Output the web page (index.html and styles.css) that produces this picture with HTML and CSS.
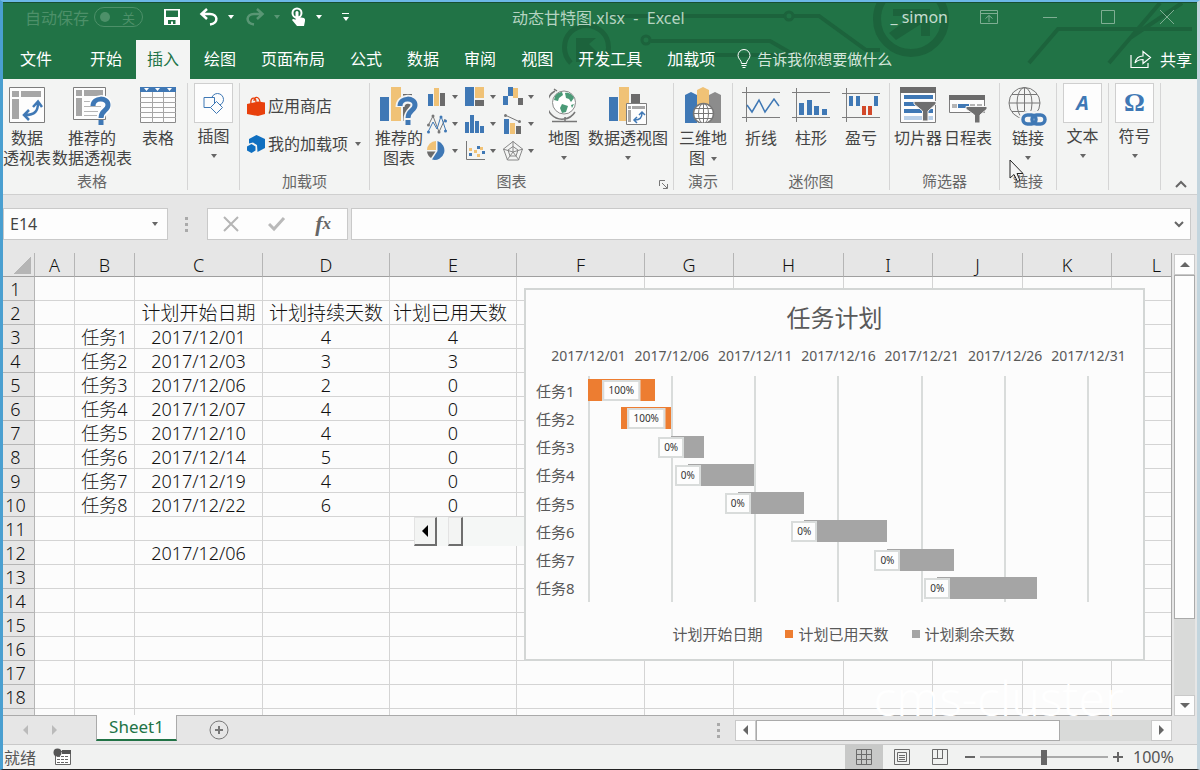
FILE: index.html
```html
<!DOCTYPE html>
<html lang="zh-CN">
<head>
    <meta charset="UTF-8">
    <meta name="viewport" content="width=device-width, initial-scale=1.0">
    <title>动态甘特图.xlsx - Excel</title>
    <link rel="stylesheet" href="styles.css">
</head>
<body>
    <div class="window">
        <header class="header">
            <svg class="circuit" width="640" height="76" viewBox="557 3 640 76" fill="none" stroke="#1c633c" stroke-width="4">
                <path d="M602 16H784M794 16H819L866 50H880"/>
                <circle cx="789" cy="16" r="4" stroke-width="3"/>
                <circle cx="646" cy="40" r="4" stroke-width="3"/>
                <path d="M651 41H770L796 56H826M708 55H790"/>
                <path d="M571 63A22 22 0 1 1 602 63" stroke-width="5"/>
                <path d="M576 62V38H596L589 44L600 55L594 61L582 50V62Z" fill="#1c633c" stroke="none"/>
                <circle cx="911" cy="19" r="34" stroke-width="8"/>
                <path d="M893 9H930V36H921V24L896 40L889 33L912 16H893Z" fill="#1c633c" stroke="none"/>
                <path d="M1029 63L1058 29H1192M1109 63L1160 3M1130 38L1182 3"/>
            </svg>
            <div class="titlebar">
                <label class="autosave">自动保存
                    <span class="toggle"><input type="checkbox">关</span>
                </label>
                <div class="quick">
                    <button class="save" aria-label="保存"><svg width="18" height="18" viewBox="0 0 18 18"><path fill="#fff" fill-rule="evenodd" d="M1 1H17V17H1ZM3 2.500V9H15V2.500ZM5 12V16H8V13.500H10V16H12.500V12Z"/></svg></button>
                    <button class="undo" aria-label="撤消"><svg width="20" height="18" viewBox="0 0 20 18"><path fill="none" stroke="#fff" stroke-width="2.500" d="M2 6H11C19 6 20 15 11 16.500M8 1L2.500 6L8 11"/></svg><i class="arrow"></i></button>
                    <button class="redo" aria-label="恢复"><svg width="20" height="18" viewBox="0 0 20 18"><path fill="none" stroke="#fff" stroke-width="2.500" d="M18 6H9C1 6 0 15 9 16.500M12 1L17.500 6L12 11"/></svg><i class="arrow"></i></button>
                    <button class="touch" aria-label="触摸模式"><svg width="16" height="20" viewBox="0 0 16 20"><circle cx="6" cy="6" r="4.500" fill="none" stroke="#fff" stroke-width="2"/><path fill="#fff" d="M4.500 5Q6 3 7.500 5V10L13 11Q14.500 12 14 14L13 19H6L1 13Q2 11 4.500 13Z"/></svg><i class="arrow"></i></button>
                    <button class="more" aria-label="自定义"><i class="arrow"></i></button>
                </div>
                <h1>动态甘特图.xlsx&nbsp; -&nbsp; Excel</h1>
                <span class="user">_ simon</span>
                <div class="controls">
                    <button aria-label="功能区选项"><svg width="18" height="14" viewBox="0 0 18 14"><path d="M.5.5H17.500V13.500H.5ZM.5 3.500H17.500M9 12V5.500M5.500 8.500L9 5.500L12.500 8.500"/></svg></button>
                    <button aria-label="最小化"><svg width="14" height="14" viewBox="0 0 14 14"><path d="M0 7.500H14"/></svg></button>
                    <button aria-label="最大化"><svg width="14" height="14" viewBox="0 0 14 14"><path d="M.5.5H13.500V13.500H.5Z"/></svg></button>
                    <button aria-label="关闭"><svg width="14" height="14" viewBox="0 0 14 14"><path d="M0 0L14 14M14 0L0 14"/></svg></button>
                </div>
            </div>
            <nav class="tabs">
                <button class="tab file">文件</button>
                <button class="tab">开始</button>
                <button class="tab active">插入</button>
                <button class="tab">绘图</button>
                <button class="tab">页面布局</button>
                <button class="tab">公式</button>
                <button class="tab">数据</button>
                <button class="tab">审阅</button>
                <button class="tab">视图</button>
                <button class="tab">开发工具</button>
                <button class="tab">加载项</button>
                <button class="tell">
                    <svg width="14" height="20" viewBox="0 0 14 20" fill="none" stroke="#fff"><path d="M4.500 14.500C4.500 11 1 10 1 6.500A6 6 0 0 1 13 6.500C13 10 9.500 11 9.500 14.500Z"/><path d="M4.500 16.500H9.500M5.500 18.500H8.500"/></svg>
                    告诉我你想要做什么
                </button>
                <button class="share">
                    <svg width="22" height="20" viewBox="0 0 22 20" fill="none" stroke="#fff" stroke-width="1.200"><path d="M1 6V18.500H18V14"/><path d="M5 14C6 9 9 7 13 7V2.500L20.500 8.500L13 14.500V10.500C9 10.500 7 11.500 5 14Z"/></svg>
                    共享
                </button>
            </nav>
        </header>

        <section class="ribbon">
            <div class="group g-table">
                <div class="tools">
                    <button class="tool">
                        <svg width="36" height="36" viewBox="0 0 36 36"><path fill="#fdfdfd" stroke="#7d7d7d" d="M.5.5H35.500V35.500H.5Z"/><path fill="#a6a6a6" d="M3 4H10V10H3ZM12 4H32V10H12ZM3 12H10V32H3Z"/><path fill="none" stroke="#3f78b5" stroke-width="2.500" d="M16 28C26 28 29 24 29 16M24 20L29 14.500L33 20M20 23L15 28L20 33"/></svg>
                        <span>数据<br>透视表</span>
                    </button>
                    <button class="tool wide">
                        <svg width="38" height="38" viewBox="0 0 38 38"><path fill="#fdfdfd" stroke="#7d7d7d" d="M.5.5H32.500V32.500H.5Z"/><path fill="#a6a6a6" d="M3 3H9V9H3ZM11 3H30V9H11ZM3 11H9V29H3Z"/><path stroke="#b5b5b5" d="M11 14.500H30M11 19.500H28M11 24.500H25M11 28.500H24"/><path fill="none" stroke="#fff" stroke-width="8" d="M20 19C20 10 35 10 35 18C35 24 28 24 28 31"/><path fill="none" stroke="#3f78b5" stroke-width="5" d="M20 19C20 10 35 10 35 18C35 24 28 23 28 31"/><path fill="#3f78b5" d="M25.500 33H30.500V38H25.500Z"/></svg>
                        <span>推荐的<br>数据透视表</span>
                    </button>
                    <button class="tool">
                        <svg width="36" height="36" viewBox="0 0 36 36"><path fill="#fdfdfd" stroke="#8a8a8a" d="M.5.5H35.500V35.500H.5Z"/><path stroke="#a6a6a6" fill="none" d="M12.500 5V36M23.500 5V36M0 10.500H36M0 15.500H36M0 20.500H36M0 25.500H36M0 30.500H36"/><path fill="#3f78b5" d="M0 0H36V5H0Z"/><path fill="#fff" d="M4 1H9L6.500 4ZM15 1H20L17.500 4ZM27 1H32L29.500 4Z"/></svg>
                        <span>表格</span>
                    </button>
                </div>
                <h2>表格</h2>
            </div>

            <div class="group g-small">
                <button class="tool boxed">
                    <b class="box"><svg width="22" height="22" viewBox="0 0 22 22" fill="none" stroke="#3f78b5"><circle cx="14.500" cy="7.500" r="6"/><path fill="#fdfdfd" d="M1 5.500H11.500V15.500H1Z"/><path fill="#fdfdfd" d="M13.500 9.500L19.500 15.500L13.500 21.500L7.500 15.500Z"/></svg></b>
                    <span>插图</span><i class="arrow"></i>
                </button>
            </div>

            <div class="group g-addins">
                <div class="links">
                    <button class="link">
                        <svg width="18" height="20" viewBox="0 0 18 20"><path fill="#e8400c" d="M0 8L11 5.500L18 6.500V18L11 20L0 18Z"/><path fill="none" stroke="#e8400c" stroke-width="1.300" d="M4 8C3 1 9 0 9 6M7 5C7 0 12 0 13 6"/></svg>
                        应用商店
                    </button>
                    <button class="link">
                        <svg width="18" height="18" viewBox="0 0 18 18" fill="#0f6fc0"><path d="M9.500 0L18 4V13L10.500 17L10 10L6 7.500L2 8.500V4Z"/><path d="M0 11.500L4.500 9L8.500 11.500V15.500L4.500 18L0 15.500Z"/></svg>
                        我的加载项 <i class="arrow"></i>
                    </button>
                </div>
                <h2>加载项</h2>
            </div>

            <div class="group g-charts">
                <div class="tools">
                    <button class="tool">
                        <svg width="38" height="38" viewBox="0 0 38 38"><path fill="#3f78b5" d="M0 10H9V34H0Z"/><path fill="#f0c276" d="M11 0H21V34H11Z"/><path fill="#6b6b6b" d="M23 7H32V34H23Z"/><path fill="none" stroke="#f4f4f4" stroke-width="9" d="M20 20C20 10 35 10 35 18C35 24 28 24 28 32V38"/><path fill="none" stroke="#3f78b5" stroke-width="5" d="M20 19C20 10 35 10 35 18C35 24 28 23 28 31"/><path fill="#3f78b5" d="M25.500 33H30.500V38H25.500Z"/></svg>
                        <span>推荐的<br>图表</span>
                    </button>
                    <div class="chart-types">
                        <button aria-label="柱形图"><svg width="20" height="20" viewBox="0 0 20 20"><path fill="#3f78b5" d="M1 7H6V19H1Z"/><path fill="#f0c276" d="M7 1H12V19H7Z"/><path fill="#6b6b6b" d="M13 6H18V19H13Z"/></svg><i class="arrow"></i></button>
                        <button aria-label="树状图"><svg width="20" height="20" viewBox="0 0 20 20"><path fill="#3f78b5" d="M0 0H9V19H0Z"/><path fill="#f0c276" d="M10 0H19V11H10Z"/><path fill="#6b6b6b" d="M10 13H19V19H10Z"/></svg><i class="arrow"></i></button>
                        <button aria-label="瀑布图"><svg width="20" height="20" viewBox="0 0 20 20"><path fill="#3f78b5" d="M0 9H5V18H0ZM5 0H10V9H5Z"/><path fill="#f0c276" d="M10 1H15V11H10Z"/><path fill="#6b6b6b" d="M15 11H20V18H15Z"/></svg><i class="arrow"></i></button>
                        <button aria-label="折线图"><svg width="20" height="20" viewBox="0 0 20 20" fill="none"><path stroke="#777" d="M1 12L6 2L12 18L18 5"/><path stroke="#3f78b5" d="M1 18L6 8L10 15L14 2L19 17"/><g fill="#777"><circle cx="1.500" cy="11" r="1.500"/><circle cx="6" cy="2" r="1.500"/><circle cx="12" cy="18" r="1.500"/></g><g fill="#3f78b5"><circle cx="1.500" cy="18" r="1.500"/><circle cx="14" cy="3" r="1.500"/><circle cx="18.500" cy="7" r="1.500"/><circle cx="18.500" cy="17" r="1.500"/></g></svg><i class="arrow"></i></button>
                        <button aria-label="直方图"><svg width="20" height="20" viewBox="0 0 20 20"><path fill="#3f78b5" d="M0 8H4V19H0ZM5 1H9V19H5ZM10 7H14V19H10ZM15 12H19V19H15Z"/></svg><i class="arrow"></i></button>
                        <button aria-label="组合图"><svg width="20" height="20" viewBox="0 0 20 20"><path fill="#3f78b5" d="M1 5H6V20H1Z"/><path fill="#f0c276" d="M7 9H12V20H7Z"/><path fill="#6b6b6b" d="M13 12H18V20H13Z"/><path fill="none" stroke="#777" d="M2 1L17 8"/><circle cx="2.500" cy="1.500" r="1.500" fill="#777"/><circle cx="16.500" cy="7.500" r="1.500" fill="#777"/></svg><i class="arrow"></i></button>
                        <button aria-label="饼图"><svg width="20" height="20" viewBox="0 0 20 20"><path fill="#3f78b5" d="M10.500 0A9.500 9.500 0 1 1 5 18.500L10.500 10Z"/><path fill="#f0c276" d="M9 0V9H0A9 9 0 0 1 9 0Z"/><path fill="#6b6b6b" d="M0 10.500H8.500L4 17A9 9 0 0 1 0 10.500Z"/></svg><i class="arrow"></i></button>
                        <button aria-label="散点图"><svg width="20" height="20" viewBox="0 0 20 20"><path fill="none" stroke="#777" d="M1.500 0V18.500H20"/><path fill="#3f78b5" d="M4 12H7V15H4ZM12 5H15V8H12ZM17 10H20V13H17Z"/><path fill="#f0c276" d="M4 7H7V10H4ZM9 9H12V12H9ZM12 13H15V16H12ZM15 6H18V9H15Z"/></svg><i class="arrow"></i></button>
                        <button aria-label="雷达图"><svg width="20" height="20" viewBox="0 0 20 20" fill="none" stroke="#888"><path d="M10 .5L19.500 8L15.500 19H4.500L.5 8ZM10 5.500L15 9L13 15H7L5 9ZM10 0V11L20 8M10 11L16 19M10 11L4 19M10 11L0 8"/></svg><i class="arrow"></i></button>
                    </div>
                    <button class="tool map">
                        <svg width="30" height="36" viewBox="0 0 30 36"><circle cx="15" cy="15.500" r="11.500" fill="#fff" stroke="#8a8a8a"/><path fill="#4b9a77" d="M6 9C8 6 11 5 13 5L14 8L10 11L9 14L5 13ZM16 6C20 5 24 8 25 11L22 15L20 12L17 11ZM13 17L19 19L17 25L13 26L11 21ZM22 18L25 17L23 21Z"/><path fill="none" stroke="#777" stroke-width="1.500" d="M5 2L8 4M6 4A15 15 0 1 0 26 25M16 30V34M3 34.500H28"/></svg>
                        <span>地图</span><i class="arrow"></i>
                    </button>
                    <button class="tool wide">
                        <svg width="40" height="38" viewBox="0 0 40 38"><path fill="#3f78b5" d="M1 10H10V34H1Z"/><path fill="#f0c276" d="M11 0H21V34H11Z"/><path fill="#6b6b6b" d="M23 7H32V20H23Z"/><path fill="#fdfdfd" stroke="#7d7d7d" d="M18.500 16.500H38.500V37.500H18.500Z"/><path fill="#a6a6a6" d="M20 19H23V22H20ZM24 19H37V22H24ZM20 23H23V35H20Z"/><path fill="none" stroke="#3f78b5" stroke-width="1.500" d="M27 33C32 33 34 30 34 26M31 28L34 25L37 28M29 30L26 33L29 36"/></svg>
                        <span>数据透视图</span><i class="arrow"></i>
                    </button>
                </div>
                <h2>图表</h2>
                <button class="launcher" aria-label="图表选项"><svg width="9" height="9" viewBox="0 0 9 9" fill="none" stroke="#777"><path d="M.5 6V.5H6M3 3L8 8M8.500 4V8.500H4"/></svg></button>
            </div>

            <div class="group g-tour">
                <div class="tools">
                    <button class="tool">
                        <svg width="36" height="36" viewBox="0 0 36 36"><path fill="#3f78b5" d="M0 8L6 5L12 8V36H0Z"/><path fill="#f0c276" d="M12 3L18 0L24 3V20H12Z"/><path fill="#8c8c8c" d="M24 8L30 5L36 8V36H24Z"/><g fill="#fff" stroke="#777"><circle cx="18.500" cy="26.500" r="10" stroke-width="1.500"/><path fill="none" d="M8.500 26.500H28.500M10 21.500H27M10 31.500H27M18.500 16.500V36.500"/><ellipse fill="none" cx="18.500" cy="26.500" rx="5" ry="10"/></g></svg>
                        <span>三维地<br>图 <i class="arrow inline"></i></span>
                    </button>
                </div>
                <h2>演示</h2>
            </div>

            <div class="group g-spark">
                <div class="tools">
                    <button class="tool">
                        <svg width="38" height="36" viewBox="0 0 38 36" fill="none"><path stroke="#7d7d7d" d="M4.500 0V35M0 5.500H38M0 30.500H38"/><path stroke="#3f78b5" stroke-width="1.500" d="M5 18L10 25L17 13L23 25L32 12L37 19"/></svg>
                        <span>折线</span>
                    </button>
                    <button class="tool">
                        <svg width="38" height="36" viewBox="0 0 38 36"><path stroke="#7d7d7d" d="M4.500 1V35M0 5.500H38M0 30.500H38"/><path fill="#3f78b5" d="M7 16H12V28H7ZM15 13H20V28H15ZM22 19H27V28H22ZM30 22H35V28H30Z"/></svg>
                        <span>柱形</span>
                    </button>
                    <button class="tool">
                        <svg width="38" height="36" viewBox="0 0 38 36"><path stroke="#7d7d7d" d="M4.500 1V35M0 6.500H38M0 30.500H38"/><path fill="#3f78b5" d="M7 9H11V19H7ZM14 9H18V19H14ZM32 9H36V19H32Z"/><path fill="#d2492a" d="M20 19H24V28H20ZM26 19H30V28H26Z"/></svg>
                        <span>盈亏</span>
                    </button>
                </div>
                <h2>迷你图</h2>
            </div>

            <div class="group g-filter">
                <div class="tools">
                    <button class="tool">
                        <svg width="36" height="36" viewBox="0 0 36 36"><path fill="#fdfdfd" stroke="#7d7d7d" d="M.5.5H35.500V35.500H.5Z"/><path fill="#6b6b6b" d="M0 0H36V6H0Z"/><path fill="#3f78b5" d="M4 8H33V12H4ZM4 15H33V19H4ZM4 22H33V26H4Z"/><path fill="#b8cfe8" d="M4 29H33V33H4Z"/><path fill="#6f6f6f" stroke="#f4f4f4" d="M14 14.500H36V17L28 24V34H22.500V24L14 17Z"/></svg>
                        <span>切片器</span>
                    </button>
                    <button class="tool">
                        <svg width="38" height="36" viewBox="0 0 38 36"><path fill="#fdfdfd" stroke="#7d7d7d" d="M.5 8.500H35.500V25.500H.5Z"/><path fill="#6b6b6b" d="M0 8H36V13H0Z"/><path fill="#b5b5b5" d="M3 17H8V21H3ZM21 17H26V21H21ZM28 17H33V21H28Z"/><path fill="#3f78b5" d="M9 17H20V21H9Z"/><path fill="#6f6f6f" stroke="#f4f4f4" d="M17 19.500H38V22L31 28V36H25.500V28L17 22Z"/></svg>
                        <span>日程表</span>
                    </button>
                </div>
                <h2>筛选器</h2>
            </div>

            <div class="group g-link">
                <div class="tools">
                    <button class="tool">
                        <svg width="40" height="40" viewBox="0 0 40 40" fill="none"><g stroke="#777"><circle cx="16.500" cy="16" r="15.500"/><ellipse cx="16.500" cy="16" rx="7.500" ry="15.500"/><path d="M1 16H32M16.500 0V32M4 7.500H29M4 24.500H29"/></g><g stroke="#f4f4f4" stroke-width="8"><rect x="15" y="28" width="14" height="9" rx="4.500"/><rect x="24" y="28" width="14" height="9" rx="4.500"/></g><g stroke="#3f78b5" stroke-width="3.500"><rect x="15" y="28" width="13" height="9" rx="4.500"/><rect x="24" y="28" width="13" height="9" rx="4.500"/></g></svg>
                        <span>链接</span><i class="arrow"></i>
                    </button>
                </div>
                <h2>链接</h2>
                <svg class="cursor" width="18" height="24" viewBox="0 0 18 24"><path fill="#f4f4f4" stroke="#222" d="M1 1V19L5 15.500L8.500 22.500L11 21.500L8 14.500H14Z"/></svg>
            </div>

            <div class="group g-small">
                <button class="tool boxed">
                    <b class="box letter">A</b>
                    <span>文本</span><i class="arrow"></i>
                </button>
            </div>
            <div class="group g-small">
                <button class="tool boxed">
                    <b class="box omega">Ω</b>
                    <span>符号</span><i class="arrow"></i>
                </button>
            </div>
            <button class="collapse" aria-label="折叠功能区"><svg width="12" height="8" viewBox="0 0 12 8" fill="none" stroke="#666" stroke-width="2"><path d="M1 7L6 2L11 7"/></svg></button>
        </section>

        <section class="formula">
            <div class="namebox">
                <input type="text" value="E14" aria-label="名称框">
                <i class="arrow"></i>
            </div>
            <i class="dots"></i>
            <div class="fx">
                <button aria-label="取消"><svg width="16" height="16" viewBox="0 0 16 16" stroke="#b5b5b5" stroke-width="2"><path d="M1 1L15 15M15 1L1 15"/></svg></button>
                <button aria-label="输入"><svg width="18" height="16" viewBox="0 0 18 16" fill="none" stroke="#b9b9b9" stroke-width="3"><path d="M1 8L6 13L16 2"/></svg></button>
                <button class="fn" aria-label="插入函数">f<small>x</small></button>
            </div>
            <div class="entry">
                <input type="text" aria-label="编辑栏">
                <svg width="10" height="7" viewBox="0 0 10 7" fill="none" stroke="#666" stroke-width="2"><path d="M1 1L5 5L9 1"/></svg>
            </div>
        </section>

        <main class="workspace">
            <div class="sheet">
                <table>
                    <colgroup>
                        <col class="w-head"><col class="w-a"><col class="w-b"><col class="w-c"><col class="w-d"><col class="w-d"><col class="w-c">
                        <col class="w-g"><col class="w-h"><col class="w-g"><col class="w-j"><col class="w-g"><col class="w-j">
                    </colgroup>
                    <thead>
                        <tr>
                            <th class="corner"></th><th>A</th><th>B</th><th>C</th><th>D</th><th>E</th><th>F</th>
                            <th>G</th><th>H</th><th>I</th><th>J</th><th>K</th><th>L</th>
                        </tr>
                    </thead>
                    <tbody></tbody>
                </table>

                <div class="spinner">
                    <button aria-label="减少"></button>
                    <span class="spinner-thumb"></span>
                </div>

                <figure class="chart">
                    <figcaption>任务计划</figcaption>
                    <div class="axis"></div>
                    <div class="plot"></div>
                    <div class="legend">
                        <span>计划开始日期</span>
                        <span class="used">计划已用天数</span>
                        <span class="left">计划剩余天数</span>
                    </div>
                </figure>
            </div>
            <div class="vscroll">
                <button class="up" aria-label="向上"></button>
                <div class="track"><div class="thumb"></div></div>
                <button class="down" aria-label="向下"></button>
            </div>
            <div class="watermark">cms-cluster</div>
        </main>

        <section class="sheetbar">
            <button class="nav prev" aria-label="上一个"></button>
            <button class="nav next" aria-label="下一个"></button>
            <button class="sheet-tab">Sheet1</button>
            <button class="add" aria-label="新工作表"><svg width="20" height="20" viewBox="0 0 20 20" fill="none" stroke="#777"><circle cx="10" cy="10" r="9"/><path stroke-width="2" d="M10 6V14M6 10H14"/></svg></button>
            <i class="dots"></i>
            <div class="hscroll">
                <button class="back" aria-label="向左"></button>
                <div class="track"><div class="thumb"></div></div>
                <button class="forward" aria-label="向右"></button>
            </div>
        </section>

        <footer class="status">
            <span class="ready">就绪</span>
            <svg width="18" height="18" viewBox="0 0 18 18"><path fill="#fff" stroke="#666" d="M2.500 3.500H17.500V16.500H2.500Z"/><path fill="#555" d="M9 2H18V6H9Z"/><circle cx="4.500" cy="4.500" r="4" fill="#555"/><path stroke="#666" stroke-dasharray="3 1" d="M4 8.500H16M4 11.500H16M4 14.500H16"/></svg>
            <div class="views">
                <button class="on" aria-label="普通"><svg width="18" height="18" viewBox="0 0 18 18"><path d="M1.500 1.500H16.500V16.500H1.500ZM6.500 1V17M11.500 1V17M1 6.500H17M1 11.500H17"/></svg></button>
                <button aria-label="页面布局"><svg width="18" height="18" viewBox="0 0 18 18"><path d="M1.500 1.500H16.500V16.500H1.500ZM4.500 4.500H13.500V13.500H4.500ZM6 7.500H12M6 9.500H12M6 11.500H12"/></svg></button>
                <button aria-label="分页预览"><svg width="18" height="18" viewBox="0 0 18 18"><path d="M1.500 1.500H16.500V16.500H1.500ZM6.500 1V10M11.500 1V10M1 10.500H12"/></svg></button>
            </div>
            <button class="zoom minus" aria-label="缩小"></button>
            <input class="slider" type="range" min="0" max="100" value="50" aria-label="缩放">
            <button class="zoom plus" aria-label="放大"></button>
            <span class="percent">100%</span>
        </footer>
    </div>

    <script>
        // name, start date, planned days, used days, days after the first date
        const tasks = [
            ['任务1', '2017/12/01', 4, 4, 0],
            ['任务2', '2017/12/03', 3, 3, 2],
            ['任务3', '2017/12/06', 2, 0, 5],
            ['任务4', '2017/12/07', 4, 0, 6],
            ['任务5', '2017/12/10', 4, 0, 9],
            ['任务6', '2017/12/14', 5, 0, 13],
            ['任务7', '2017/12/19', 4, 0, 18],
            ['任务8', '2017/12/22', 6, 0, 21]
        ]
        const dates = ['2017/12/01', '2017/12/06', '2017/12/11', '2017/12/16', '2017/12/21', '2017/12/26', '2017/12/31']
        const days = 30

        const cells = { 2: ['', '', '计划开始日期', '计划持续天数', '计划已用天数'], 12: ['', '', '2017/12/06'] }
        tasks.forEach((t, i) => cells[i + 3] = ['', t[0], t[1], t[2], t[3]])
        let rows = ''
        for (let r = 1; r <= 19; r++) {
            rows += `<tr class="row${r}"><th>${r < 19 ? r : ''}</th>`
            for (let c = 0; c < 12; c++) {
                const value = cells[r] && cells[r][c] !== undefined ? cells[r][c] : ''
                rows += `<td>${value}</td>`
            }
            rows += '</tr>'
        }
        document.querySelector('tbody').innerHTML = rows

        document.querySelector('.axis').innerHTML = dates.map(d => `<span>${d}</span>`).join('')
        document.querySelector('.plot').innerHTML = tasks.map(t => {
            const bar = `margin-left: ${t[4] / days * 100}%; width: ${t[2] / days * 100}%`
            const used = t[3] / t[2] * 100
            return `<div class="task"><span class="name">${t[0]}</span><div class="lane">
                <div class="bar" style="${bar}"><div class="done" style="width: ${used}%"><span>${used}%</span></div></div>
            </div></div>`
        }).join('')
    </script>
</body>
</html>
```
FILE: styles.css
```css
* {
    box-sizing: border-box;
}
body {
    margin: 0;
    font-family: "Noto Sans", "Noto Sans CJK SC", sans-serif;
    font-size: 16px;
    color: #444;
}
button, input {
    font: inherit;
    color: inherit;
    background: none;
    border: none;
    padding: 0;
    margin: 0;
}
button {
    display: flex;
    align-items: center;
    justify-content: center;
    white-space: nowrap;
}
h1, h2, figure {
    margin: 0;
    font-weight: normal;
}
svg {
    display: block;
    flex: none;
}
.window {
    display: flex;
    flex-direction: column;
    height: 100vh;
    min-height: 600px;
    border-top: 2px solid #6cb8e6;
    border-right: 3px solid #c3d5de;
    border-bottom: 1px solid #222;
    border-left: 3px solid #4a9fd0;
    overflow: hidden;
}
.arrow {
    flex: none;
    width: 0;
    border: 3px solid transparent;
    border-top: 4px solid #666;
    border-bottom: none;
}

/* title bar and tabs */
.header {
    position: relative;
    flex: none;
    background: #217346;
    border-top: 1px solid #184f31;
    color: #fff;
}
.circuit {
    position: absolute;
    top: 0;
    right: 0;
}
.titlebar, .tabs {
    position: relative;
    display: flex;
}
.titlebar {
    height: 28px;
    align-items: center;
}
.header .arrow {
    border-top-color: #fff;
}
.autosave {
    display: flex;
    align-items: center;
    gap: 5px;
    margin-left: 22px;
    color: #4d9069;
}
.toggle {
    display: flex;
    align-items: center;
    justify-content: space-between;
    width: 49px;
    height: 20px;
    padding: 0 7px 0 5px;
    border: 1px solid #4d9069;
    border-radius: 10px;
    font-size: 13px;
}
.toggle input {
    appearance: none;
    width: 10px;
    height: 10px;
    border-radius: 5px;
    background: #4d9069;
}
.quick {
    display: flex;
    align-items: center;
    width: 349px;
    margin-left: 20px;
}
.quick button {
    gap: 9px;
    margin-right: 11px;
}
.quick .save {
    margin-right: 18px;
}
.quick .redo {
    opacity: .25;
}
.quick .more {
    width: 7px;
    height: 8px;
    margin-left: 9px;
    align-items: flex-end;
    border-top: 1px solid #fff;
}
.titlebar h1 {
    flex: 1;
    font-size: 16px;
    color: #b5d3c1;
}
.user {
    margin-right: 32px;
    color: #c4dccf;
}
.controls {
    display: flex;
    justify-content: space-between;
    width: 194px;
    margin-right: 23px;
}
.controls svg {
    fill: none;
    stroke: #7fae93;
}
.tabs {
    height: 48px;
    align-items: flex-end;
    gap: 3px;
    padding-left: 6px;
}
.tab {
    height: 39px;
    padding: 0 11px 4px;
}
.tab.file {
    margin-right: 13px;
}
.tab.active {
    background: #f3f4f3;
    color: #217346;
}
.tell {
    height: 39px;
    margin-left: 8px;
    padding-bottom: 2px;
    gap: 6px;
    font-size: 15px;
    color: #d5e6dc;
}
.share {
    height: 39px;
    margin: 0 5px 0 auto;
    padding-bottom: 2px;
    gap: 8px;
}

/* ribbon */
.ribbon {
    display: flex;
    flex: none;
    height: 116px;
    padding: 4px 0;
    background: #f3f4f3;
    border-bottom: 1px solid #cfcfcf;
    line-height: 20px;
}
.group {
    position: relative;
    display: flex;
    flex-direction: column;
    justify-content: space-between;
    flex: none;
    border-right: 1px solid #d5d5d5;
}
.group h2 {
    font-size: 15px;
    line-height: 17px;
    text-align: center;
    color: #666;
}
.g-table { width: 185px; }
.g-small { width: 52px; }
.g-addins { width: 130px; }
.g-charts { width: 304px; }
.g-tour { width: 59px; }
.g-spark { width: 157px; }
.g-filter { width: 110px; }
.g-link { width: 57px; }
.tools {
    display: flex;
    align-items: flex-start;
}
.tool {
    flex-direction: column;
    justify-content: flex-start;
    width: 50px;
    padding-top: 4px;
}
.tool svg {
    margin-bottom: 5px;
}
.tool svg[height="38"] {
    margin-bottom: 3px;
}
.tool svg[height="40"] {
    margin-bottom: 1px;
}
.tool > .arrow {
    margin-top: 8px;
}
.tool.wide {
    width: 82px;
}
.tool.map {
    width: 46px;
}
.arrow.inline {
    display: inline-block;
    margin: 0 0 3px 2px;
}
.tool.boxed {
    width: 51px;
    padding: 0;
}
.box {
    display: flex;
    align-items: center;
    justify-content: center;
    width: 39px;
    height: 40px;
    margin-bottom: 3px;
    background: #fdfdfd;
    border: 1px solid #cfcfcf;
    color: #3f78b5;
}
.box svg {
    margin: 0;
}
.letter {
    font-style: italic;
    font-size: 20px;
}
.omega {
    font-family: "Liberation Serif", serif;
    font-size: 26px;
}
.g-spark .tools, .g-filter .tools {
    padding-left: 3px;
}
.g-table .tool:first-child {
    width: 48px;
}
.g-table h2 {
    padding-right: 6px;
}
.links {
    display: flex;
    flex-direction: column;
    gap: 18px;
    padding: 13px 0 0 7px;
}
.link {
    justify-content: flex-start;
    height: 20px;
    gap: 3px;
}
.link .arrow {
    margin-left: 4px;
}
.g-charts .tools {
    padding-left: 4px;
}
.chart-types {
    display: grid;
    grid-template-columns: repeat(3, 38px);
    grid-auto-rows: 27px;
    margin-left: 3px;
}
.chart-types button {
    justify-content: flex-start;
    gap: 5px;
}
.chart-types svg {
    margin: 0;
}
.g-charts h2 {
    padding-right: 20px;
}
.launcher {
    position: absolute;
    right: 5px;
    bottom: 1px;
}
.g-tour .tools, .g-link .tools {
    justify-content: center;
}
.cursor {
    position: absolute;
    left: 9px;
    top: 76px;
}
.collapse {
    align-self: flex-end;
    margin: 0 10px 2px auto;
}

/* formula bar */
.formula {
    display: flex;
    align-items: center;
    flex: none;
    height: 58px;
    padding: 0 6px 0 0;
    background: #e6e6e6;
}
.namebox, .fx, .entry {
    display: flex;
    align-items: center;
    height: 32px;
    background: #fdfdfd;
    border: 1px solid #c9c9c9;
}
.namebox {
    width: 165px;
    padding: 0 9px 0 6px;
}
.namebox input, .entry input {
    flex: 1;
    width: 0;
}
.dots {
    width: 3px;
    height: 15px;
    margin: 0 19px 0 17px;
    background: repeating-linear-gradient(#aaa 0 3px, transparent 3px 6px);
}
.fx {
    justify-content: space-between;
    width: 141px;
    margin-right: 3px;
    padding: 0 16px 0 15px;
}
.fn {
    font-family: "Liberation Serif", serif;
    font-size: 22px;
    font-style: italic;
    font-weight: bold;
    color: #666;
}
.fn small {
    font-size: 17px;
}
.entry {
    flex: 1;
    padding: 0 6px;
}

/* cells */
.workspace {
    position: relative;
    display: flex;
    flex: 1;
    min-height: 0;
    background: #e6e6e6;
}
.sheet {
    position: relative;
    flex: 1;
    min-width: 0;
    overflow: hidden;
    background: #fcfcfc;
    border-right: 1px solid #aaa;
    border-bottom: 1px solid #aaa;
}
table {
    table-layout: fixed;
    width: 1199px;
    border-spacing: 0;
    font-size: 18px;
    font-weight: 300;
    line-height: 21px;
    color: #111;
}
.w-head { width: 32px; }
.w-a { width: 40px; }
.w-b { width: 60px; }
.w-c { width: 128px; }
.w-d { width: 127px; }
.w-g { width: 89px; }
.w-h { width: 110px; }
.w-j { width: 90px; }
th, td {
    height: 24px;
    padding: 2px 0 0;
    border-right: 1px solid #d4d4d4;
    border-bottom: 1px solid #d4d4d4;
    font-weight: 300;
    text-align: center;
    white-space: nowrap;
}
th {
    background: #e6e6e6;
    border-color: #b5b5b5;
}
thead th {
    border-bottom-color: #9f9f9f;
}
tbody th {
    padding-right: 6px;
}
.corner {
    background: linear-gradient(to bottom right, transparent 50%, #b5b5b5 50%) 11px 4px / 17px 17px no-repeat #e6e6e6;
}
.row2 {
    font-size: 19px;
}
.row2 td:nth-child(6) {
    padding-left: 3px;
    text-align: left;
}
.row2 th {
    font-size: 18px;
}
.spinner {
    position: absolute;
    left: 411px;
    top: 264px;
    display: flex;
    gap: 11px;
    width: 110px;
    height: 29px;
    background: #f5f7f6;
}
.spinner button, .spinner-thumb {
    width: 23px;
    background: #f3f4f3;
    border: 2px solid #6e6e6e;
    border-top: 1px solid #e3e3e3;
    border-left: 1px solid #e3e3e3;
}
.spinner button::before {
    content: "";
    border: 6px solid transparent;
    border-right-color: #000;
    border-left: none;
}
.spinner-thumb {
    width: 15px;
}

/* gantt chart */
.chart {
    position: absolute;
    left: 521px;
    top: 35px;
    width: 621px;
    height: 373px;
    padding-top: 11px;
    background: #fcfcfc;
    border: 2px solid #d3d6d5;
    color: #595959;
}
figcaption {
    font-size: 24px;
    line-height: 34px;
    text-align: center;
}
.axis {
    display: flex;
    justify-content: space-between;
    margin: 11px 13px 10px 21px;
    font-size: 14px;
    line-height: 20px;
}
.axis span {
    width: 83px;
    text-align: center;
}
.plot {
    display: grid;
    grid-template-rows: repeat(8, 1fr);
    height: 226px;
    margin: 0 54px 0 10px;
    font-size: 15px;
}
.task {
    display: flex;
    align-items: center;
}
.name {
    width: 52px;
}
.lane {
    display: flex;
    align-items: center;
    flex: 1;
    height: 100%;
    border-right: 2px solid #d9dcdb;
    background: repeating-linear-gradient(to right, #d9dcdb 0 2px, transparent 2px calc(100% / 6));
}
.bar {
    height: 22px;
    background: #a5a5a5;
}
.done {
    position: relative;
    height: 100%;
    background: #ed7d31;
}
.done span {
    position: absolute;
    left: 50%;
    top: 1px;
    transform: translateX(-50%);
    padding: 0 4px;
    background: #fdfdfd;
    border: 2px solid #d9dcdb;
    font-size: 10px;
    line-height: 17px;
    color: #333;
}
.legend {
    display: flex;
    justify-content: center;
    gap: 23px;
    margin-top: 22px;
    padding-left: 18px;
    font-size: 15px;
    line-height: 20px;
}
.legend span {
    display: flex;
    align-items: center;
    gap: 5px;
}
.used::before, .left::before {
    content: "";
    width: 8px;
    height: 8px;
    background: #ed7d31;
}
.left::before {
    background: #a5a5a5;
}
.watermark {
    position: absolute;
    right: 73px;
    bottom: -10px;
    z-index: 2;
    font-size: 48px;
    font-weight: 300;
    line-height: 56px;
    color: #fff;
    pointer-events: none;
}

/* scroll bars */
.vscroll {
    display: flex;
    flex-direction: column;
    width: 25px;
    padding: 1px 2px 0 2px;
}
.vscroll button, .hscroll button {
    flex: none;
    width: 21px;
    height: 21px;
    background: #fdfdfd;
    border: 1px solid #c9c9c9;
}
.vscroll button::before, .hscroll button::before, .nav::before {
    content: "";
    border: 5px solid transparent;
}
.vscroll .up::before {
    border-bottom-color: #666;
    border-top: none;
}
.vscroll .down::before {
    border-top-color: #666;
    border-bottom: none;
}
.hscroll .back::before {
    border-right-color: #666;
    border-left: none;
}
.hscroll .forward::before {
    border-left-color: #666;
    border-right: none;
}
.track {
    flex: 1;
    background: #d9dad9;
}
.track .thumb {
    background: #fdfdfd;
    border: 1px solid #aaa;
}
.vscroll .thumb {
    height: 82%;
}
.hscroll .thumb {
    width: 77%;
    height: 100%;
}

/* sheet tabs */
.sheetbar {
    display: flex;
    align-items: center;
    flex: none;
    height: 28px;
    padding: 0 25px 0 19px;
    background: #e6e6e6;
}
.nav {
    width: 6px;
    margin-right: 23px;
}
.prev::before {
    border-right-color: #bbb;
    border-left: none;
}
.next::before {
    border-left-color: #bbb;
    border-right: none;
}
.sheet-tab {
    align-self: flex-start;
    width: 81px;
    height: 26px;
    margin: -1px 32px 0 16px;
    z-index: 1;
    background: #fcfcfc;
    border: 1px solid #aaa;
    border-top: none;
    border-bottom: 2px solid #217346;
    font-size: 17px;
    line-height: 20px;
    color: #217346;
}
.sheetbar .dots {
    margin: 0 15px 0 auto;
}
.hscroll {
    display: flex;
    width: 38%;
    height: 21px;
}

/* status bar */
.status {
    display: flex;
    align-items: center;
    flex: none;
    height: 25px;
    padding: 0 18px 0 1px;
    background: #f1f2f1;
    border-top: 1px solid #c9c9c9;
    color: #555;
}
.ready {
    margin-right: 17px;
    font-size: 16px;
}
.views {
    display: flex;
    align-self: stretch;
    margin-left: auto;
}
.views button {
    width: 38px;
}
.views .on {
    background: #c8c9c8;
}
.views svg {
    fill: none;
    stroke: #6b6b6b;
}
.zoom {
    width: 10px;
    height: 10px;
    background: linear-gradient(#666, #666) center / 10px 2px no-repeat;
}
.minus {
    margin: 0 5px 0 6px;
}
.plus {
    margin: 0 10px 0 5px;
    background: linear-gradient(#666, #666) center / 10px 2px no-repeat, linear-gradient(#666, #666) center / 2px 10px no-repeat;
}
.slider {
    appearance: none;
    width: 128px;
    height: 16px;
    background: linear-gradient(#aaa, #aaa) center / 100% 2px no-repeat;
}
.slider::-webkit-slider-thumb {
    appearance: none;
    width: 6px;
    height: 15px;
    background: #666;
}
.percent {
    width: 46px;
    font-size: 16px;
}
```
